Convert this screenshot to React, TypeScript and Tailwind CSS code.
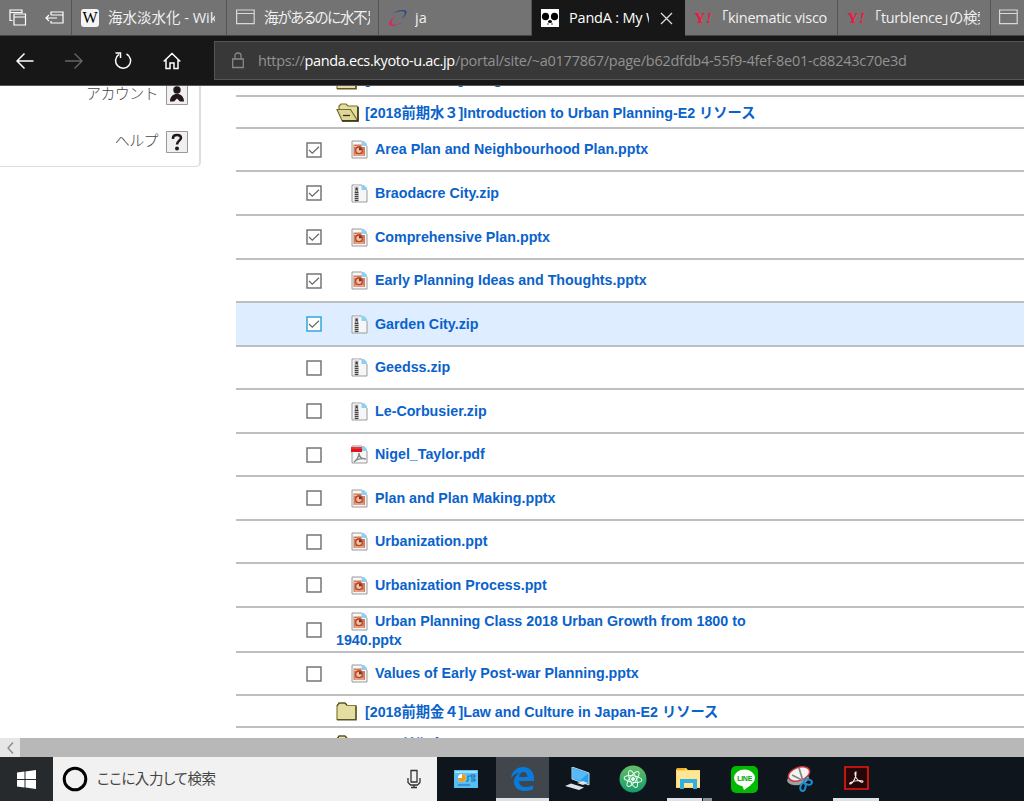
import type { ReactNode } from "react";
import clsx from "clsx";

type Kind = "ppt" | "zip" | "pdf";

const files: { name: string; kind: Kind; height: string; checked?: boolean; active?: boolean }[] = [
  { name: "Area Plan and Neighbourhood Plan.pptx", kind: "ppt", height: "h-[43px]", checked: true },
  { name: "Braodacre City.zip", kind: "zip", height: "h-[44px]", checked: true },
  { name: "Comprehensive Plan.pptx", kind: "ppt", height: "h-[44px]", checked: true },
  { name: "Early Planning Ideas and Thoughts.pptx", kind: "ppt", height: "h-[43px]", checked: true },
  { name: "Garden City.zip", kind: "zip", height: "h-[44px]", checked: true, active: true },
  { name: "Geedss.zip", kind: "zip", height: "h-[43px]" },
  { name: "Le-Corbusier.zip", kind: "zip", height: "h-[44px]" },
  { name: "Nigel_Taylor.pdf", kind: "pdf", height: "h-[43px]" },
  { name: "Plan and Plan Making.pptx", kind: "ppt", height: "h-[44px]" },
  { name: "Urbanization.ppt", kind: "ppt", height: "h-[43px]" },
  { name: "Urbanization Process.ppt", kind: "ppt", height: "h-[44px]" },
  { name: "Urban Planning Class 2018 Urban Growth from 1800 to 1940.pptx", kind: "ppt", height: "h-[45px]" },
  { name: "Values of Early Post-war Planning.pptx", kind: "ppt", height: "h-[43px]" },
];

function WindowIcon() {
  return (
    <svg width="19" height="16" viewBox="0 0 19 16" fill="none" stroke="#d8d8d8" strokeWidth="1.200" className="-mt-[1px] shrink-0">
      <path d="M.6 1h17.600v13.600H.6zM.6 4.500h17.600" />
    </svg>
  );
}

function YahooIcon() {
  return (
    <span className="w-[18px] shrink-0 pt-[2px] font-['Liberation_Serif',serif] text-[14px] font-black leading-4 text-[#f01840]">
      <span className="inline-block origin-left scale-x-[1.15] whitespace-nowrap">
        Y<i>!</i>
      </span>
    </span>
  );
}

function WikiIcon() {
  return (
    <span className="flex h-[18px] w-[18px] shrink-0 items-center justify-center rounded-[3px] bg-[#f5f5f5] font-['Liberation_Serif',serif] text-[16px] leading-none text-black">
      W
    </span>
  );
}

function SwooshIcon() {
  return (
    <svg width="20" height="18" viewBox="0 0 20 18" fill="none" className="shrink-0">
      <path d="M5 4C10 .5 18 0 18.500 2.500 19 5 16.500 7.500 13.500 10 17 6 18 3.500 15.500 2.500 13 1.600 9 2.500 5 4Z" fill="#264a86" />
      <path d="M7 7C2 11 0 14 1.500 16 3.500 18 10 16.500 15 13 10 15.500 5 16.500 4 15 3 13.500 4 10.500 7 7Z" fill="#d42a5b" />
    </svg>
  );
}

function PandaIcon() {
  return (
    <svg width="18" height="18" viewBox="0 0 18 18" className="shrink-0">
      <path fill="#fff" d="M0 0h18v18H0z" />
      <ellipse cx="4.500" cy="7.500" rx="3.600" ry="3.800" />
      <ellipse cx="13.500" cy="7.500" rx="3.600" ry="3.800" />
      <ellipse cx="9" cy="12.500" rx="2" ry="1.500" />
      <circle cx="7" cy="15" r=".7" />
      <circle cx="11" cy="15" r=".7" />
    </svg>
  );
}

function Tab({ icon, width, textClass, children }: { icon: ReactNode; width: string; textClass: string; children: ReactNode }) {
  return (
    <div className={clsx("flex h-full shrink-0 items-center gap-[9px] border-r-[1.5px] border-[#555] pl-[9px]", width)}>
      {icon}
      <span className={clsx("block shrink-0 overflow-hidden whitespace-nowrap leading-6 text-[#f0f0f0] [font-feature-settings:'palt']", textClass)}>
        {children}
      </span>
    </div>
  );
}

function Checkbox({ checked, active }: { checked?: boolean; active?: boolean }) {
  return (
    <svg width="16" height="16" viewBox="0 0 16 16" fill="none" className="shrink-0">
      <rect x="1" y="1" width="14" height="14" fill="#fff" stroke={active ? "#24a0df" : "#6c6c6c"} strokeWidth="1.400" />
      {checked && <path d="M3 8l3.300 3.200 6.700-6.400" stroke="#666" strokeWidth="1.200" />}
    </svg>
  );
}

function FileIcon({ kind }: { kind: Kind }) {
  return (
    <svg width="17" height="19" viewBox="0 0 17 19" fill="none" className="relative -top-px mr-[7px] ml-[15px] inline-block align-middle">
      <path d="M1 1h9.500L16 6v12H1z" fill="#f5f6f7" stroke="#9a9a9a" />
      <path d="M10.500 1v5H16V4L13 1z" fill="#8fd0f2" />
      {kind === "ppt" && (
        <>
          <path d="M2.500 4.500h8v2.500H14v9H2.500z" fill="#d67d5b" />
          <path d="M3 6.500h3M3.500 15h9.500" stroke="#f3c4b0" strokeWidth="1.200" />
          <circle cx="8" cy="10.300" r="3.300" fill="#f3bfa6" stroke="#b04a2d" strokeWidth="1.300" />
          <path d="M8 10.300V7.400a2.900 2.900 0 0 1 2.900 2.900z" fill="#8c2d1a" />
        </>
      )}
      {kind === "zip" && (
        <>
          <path d="M3 1h5v17H3z" fill="#ddd" />
          <path d="M5.600 8v10" stroke="#444" strokeWidth="3.600" strokeDasharray="1.300 .7" />
          <path d="M5.600 3.500v5" stroke="#333" strokeWidth="2.200" />
          <circle cx="5.600" cy="7" r=".7" fill="#fff" />
        </>
      )}
      {kind === "pdf" && (
        <>
          <path d="M0 2h11v5H0z" fill="#e3131b" />
          <path d="M0 2.500h11v1H0z" fill="#f25a5c" />
          <path d="M3 17c4-3 5-6 5-9 0 4 2.500 6 7 6-5-1-9 0-12 3Z" stroke="#888" strokeWidth="1.400" />
        </>
      )}
    </svg>
  );
}

function FolderIcon({ open }: { open?: boolean }) {
  return (
    <svg width={open ? 23 : 21} height="19" viewBox={open ? "0 0 23 19" : "0 0 21 19"} className="shrink-0" strokeWidth="1.200">
      {open ? (
        <>
          <path d="M3 6V3l2-2h5l2 2h9l1 1v14H6" fill="#e4dea0" stroke="#766f2a" />
          <path d="M1 6.500h13.500l7 11H6z" fill="#ded797" stroke="#766f2a" />
          <path d="M22 4v14H6" fill="none" stroke="#333014" strokeWidth="1.500" />
          <path d="M7 12.500h7" stroke="#333014" strokeWidth="1.300" />
        </>
      ) : (
        <>
          <path d="M1 4l2-3h6l2 2.500h9v14H1z" fill="#e4dea0" stroke="#857d35" />
          <path d="M1 17.700h19V4" fill="none" stroke="#5c5625" strokeWidth="1.500" />
          <path d="M1 4l2-3h6l2 2" fill="none" stroke="#4b461b" strokeWidth="1.200" />
        </>
      )}
    </svg>
  );
}

function FolderRow({ name, open, className, textClass = "mt-px" }: { name: string; open?: boolean; className?: string; textClass?: string }) {
  return (
    <div className={clsx("flex shrink-0 items-center border-b-2 border-[#bfbfbf] pl-[100px]", className)}>
      <FolderIcon open={open} />
      <span className={clsx("whitespace-nowrap", textClass, open ? "ml-[6px]" : "ml-[8px]")}>{name}</span>
    </div>
  );
}

function Taskbar() {
  return (
    <footer className="flex h-11 shrink-0 bg-[#0e151d]">
      <div className="flex w-[53px] items-center justify-center bg-[#262a2d]">
        <svg width="19" height="19" viewBox="0 0 19 19" fill="#fff">
          <path d="M0 2.600l7.500-1V9H0zM8.500 1.500L19 0v9H8.500zM0 10h7.500v7.400l-7.500-1zM8.500 10H19v9l-10.500-1.500z" />
        </svg>
      </div>
      <div className="flex w-[384px] items-center bg-[#f1f1f1] pl-[9px]">
        <svg width="26" height="26" viewBox="0 0 26 26" fill="none" stroke="#000" strokeWidth="3">
          <circle cx="13" cy="13" r="10.800" />
        </svg>
        <span className="ml-[9px] w-[310px] text-[14.500px] tracking-[-0.4px] text-[#444] [font-feature-settings:'palt']">ここに入力して検索</span>
        <svg width="14" height="20" viewBox="0 0 14 20" fill="none" stroke="#333" strokeWidth="1.300">
          <path d="M4 1.500h6V13H4zM1 9v4.500L3.500 16h7l2.500-2.500V9M7 16v2.500M4 18.500h6" />
        </svg>
      </div>
      <div className="ml-[1px] grid w-[446px] grid-cols-8 *:flex *:items-center *:justify-center">
        <div>
          <svg width="24" height="18" viewBox="0 0 24 18">
            <path fill="#58bdf2" d="M0 0h24v18H0z" />
            <path fill="#9be0ff" d="M1 1h22v2H1z" />
            <circle cx="8" cy="8" r="4" fill="#fff" />
            <path d="M8 8V4a4 4 0 1 1-4 4z" fill="#ef9d20" />
            <path d="M12 11h2V6h2m1-1h4v2h-4zM17 9h4v2h-4M4 15h12" stroke="#176ba9" fill="none" />
          </svg>
        </div>
        <div className="mr-[1px] ml-[2px] border-b-[3px] border-[#dbe3e9] bg-[#41464c]">
          <svg width="23" height="24" viewBox="0 0 23 24" fill="#087bdc" className="mt-[2px]">
            <path d="M0 11C1 4 6 0 12 0c7 0 11 5 11 11v3H8c0 4 3 6 7 6 3 0 5-.6 7-1.700v4c-2.500 1.200-5 1.700-8 1.700C7 24 3 20 3 15c0-4 2-7 5.500-9C5 6.500 2 8 0 11Zm8-1h8.500c0-3-1.500-5-4-5S8.500 7 8 10Z" />
          </svg>
        </div>
        <div>
          <svg width="25" height="24" viewBox="0 0 25 24">
            <path d="M7 0l17 6v12L7 12z" fill="#249eed" stroke="#b9dced" />
            <path d="M8 1.500l15 5-8 7-7-2z" fill="#57b9f7" />
            <path d="M12 16l6-2 5 2-5 2zM0 19l6-2.500 13 4-5 2.500z" fill="#dce2e6" />
          </svg>
        </div>
        <div>
          <svg width="28" height="28" viewBox="0 0 28 28" fill="none" stroke="#eaffef" strokeWidth="1">
            <defs>
              <linearGradient id="atom" x2="0" y2="1">
                <stop stopColor="#63be68" />
                <stop offset="1" stopColor="#159b6c" />
              </linearGradient>
            </defs>
            <circle cx="14" cy="14" r="13.500" fill="url(#atom)" stroke="none" />
            <ellipse cx="14" cy="14" rx="3.300" ry="9" transform="rotate(-22 14 14)" />
            <ellipse cx="14" cy="14" rx="3.300" ry="9" transform="rotate(38 14 14)" />
            <ellipse cx="14" cy="14" rx="3.300" ry="9" transform="rotate(98 14 14)" />
            <circle cx="14" cy="14" r="1.500" fill="#eaffef" />
          </svg>
        </div>
        <div className="relative">
          <svg width="25" height="22" viewBox="0 0 25 22">
            <path d="M0 2l1-2h9l2 2h12v18H0z" fill="#fbd968" />
            <path d="M1 3h23v16H1z" fill="#ffe594" />
            <path d="M4 21V11h17v10h-4v-6H8v6z" fill="#30aee8" />
            <path fill="#f4ae21" d="M1 0h8v2H1z" />
          </svg>
          <i className="absolute bottom-0 left-[6px] h-[3px] w-[35px] bg-[#dbe3e9]" />
          <i className="absolute bottom-0 left-[42px] h-[3px] w-[9px] bg-[#8a9197]" />
        </div>
        <div>
          <div className="relative flex h-[27px] w-[27px] items-center justify-center rounded-[5px] bg-[#00b900]">
            <svg width="23" height="23" viewBox="0 0 23 23" fill="#fff">
              <ellipse cx="11.500" cy="10" rx="10.500" ry="8.500" />
              <path d="M9 17h9l-7 5z" />
            </svg>
            <b className="absolute top-[8px] font-['Liberation_Sans',sans-serif] text-[7px] leading-[9px] tracking-[-0.3px] text-[#00a900]">LINE</b>
          </div>
        </div>
        <div>
          <svg width="26" height="26" viewBox="0 0 26 26" fill="none">
            <ellipse cx="11" cy="13" rx="11" ry="6" fill="#9aa0a4" transform="rotate(-10 11 13)" />
            <ellipse cx="12" cy="8" rx="11" ry="6.500" fill="#f4f4f4" stroke="#cd393d" strokeWidth="1.500" transform="rotate(-20 12 8)" />
            <path d="M12 2l4 13M5 9l12 6" stroke="#888" strokeWidth="1.800" />
            <ellipse cx="21" cy="16" rx="4" ry="2.500" stroke="#218bd0" strokeWidth="2" transform="rotate(15 21 16)" />
            <ellipse cx="16" cy="21" rx="2.500" ry="4" stroke="#218bd0" strokeWidth="2" transform="rotate(15 16 21)" />
          </svg>
        </div>
        <div className="relative">
          <svg width="25" height="24" viewBox="0 0 25 24" fill="none" className="-mt-[3px]">
            <path d="M1 1h23v22H1z" fill="#260709" stroke="#f01810" strokeWidth="1.600" />
            <path d="M6.500 18c3-1.500 6-7 5.500-12-1.500-.5-1.500 4 1 7 2.500 3 6 4 6 2.500s-7-1.500-12.500 1c-1 .5-1 1.800 0 1.500Z" stroke="#f5e9e9" strokeWidth="1.100" />
          </svg>
          <i className="absolute bottom-0 left-[5px] h-[3px] w-[46px] bg-[#dbe3e9]" />
        </div>
      </div>
    </footer>
  );
}

export default function App() {
  return (
    <div className="flex h-[801px] w-[1024px] flex-col overflow-hidden bg-white font-['Open_Sans','Noto_Sans_CJK_JP',sans-serif]">
      {/* Tabs */}
      <header className="flex h-9 shrink-0 border-b border-[#444] bg-[#737373]">
        <div className="flex w-[72px] shrink-0 items-center gap-[18px] border-r-[1.5px] border-[#555] pl-[9px]">
          <svg width="18" height="17" viewBox="0 0 18 17" fill="none" stroke="#fff" strokeWidth="1.200">
            <path d="M3.500 11.500H1V1h12v3M1 3.500h12M5 5h11.500v11H5zM5 8h11.500" />
          </svg>
          <svg width="19" height="14" viewBox="0 0 19 14" fill="none" stroke="#fff" strokeWidth="1.200">
            <path d="M6 4V1h12v11H6V10M6 4h12M1 7h11M4 4L1 7l3 3" />
          </svg>
        </div>
        <Tab icon={<WikiIcon />} width="w-[155px]" textClass="w-[107px] text-[14.500px]">
          海水淡水化 - Wiki
        </Tab>
        <Tab icon={<WindowIcon />} width="w-[152px]" textClass="w-[106px] text-[14.500px] tracking-[-1.3px]">
          海があるのに水不足
        </Tab>
        <Tab icon={<SwooshIcon />} width="w-[153px]" textClass="w-[100px] text-[14.500px] -ml-[2px]">
          ja
        </Tab>
        <div className="flex h-9 w-[153px] shrink-0 items-center bg-[#171717] pl-[9px]">
          <PandaIcon />
          <span className="ml-[10px] w-[80px] overflow-hidden whitespace-nowrap text-[14.500px] tracking-[-0.2px] text-white">PandA : My W</span>
          <svg width="13" height="13" viewBox="0 0 13 13" stroke="#ddd" strokeWidth="1.300" className="ml-[11px]">
            <path d="M1 1l11 11M12 1L1 12" />
          </svg>
        </div>
        <Tab icon={<YahooIcon />} width="w-[153px]" textClass="w-[108px] text-[14.500px] tracking-[-0.25px]">
          「kinematic visco
        </Tab>
        <Tab icon={<YahooIcon />} width="w-[153px]" textClass="w-[106px] text-[14.500px] tracking-[-0.35px]">
          「turblence」の検索
        </Tab>
        <div className="flex flex-1 items-center pl-[8px]">
          <WindowIcon />
        </div>
      </header>

      {/* Navigation */}
      <nav className="flex h-[50px] shrink-0 items-center border-b-[1.5px] border-[#555] bg-[#171717]">
        <div className="flex w-[214px] shrink-0 items-center gap-[31px] pl-[16px]">
          <svg width="18" height="16" viewBox="0 0 18 16" fill="none" stroke="#fff" strokeWidth="1.500">
            <path d="M17.500 8H1M8.500.5L1 8l7.500 7.500" />
          </svg>
          <svg width="18" height="16" viewBox="0 0 18 16" fill="none" stroke="#666" strokeWidth="1.400">
            <path d="M0 8h17M9.500.5L17 8l-7.500 7.500" />
          </svg>
          <svg width="18" height="19" viewBox="0 0 18 19" fill="none" stroke="#fff" strokeWidth="1.500">
            <path d="M12.500 3a7.500 7.500 0 1 1-7.500.4M1.500 2h5v5" />
          </svg>
          <svg width="18" height="18" viewBox="0 0 18 18" fill="none" stroke="#fff" strokeWidth="1.500">
            <path d="M.7 9.500L9 1.500l8.300 8M3 7.500V16.500h4V11h4v5.500h4V7.500" />
          </svg>
        </div>
        <div className="flex h-[39px] flex-1 items-center border border-r-0 border-[#555] bg-[#383838] pl-[17px]">
          <svg width="12" height="17" viewBox="0 0 12 17" fill="none" stroke="#888" strokeWidth="1.300">
            <path d="M.7 7h10.600v8.500H.7zM3 7V3.500C3 2 4 1 6 1s3 1 3 2.500V7" />
          </svg>
          <span className="ml-[14px] whitespace-nowrap text-[14.500px] tracking-[-0.36px] text-[#929292]">
            https://<span className="text-white">panda.ecs.kyoto-u.ac.jp</span>
            <span className="tracking-[-0.26px]">/portal/site/~a0177867/page/b62dfdb4-55f9-4fef-8e01-c88243c70e3d</span>
          </span>
        </div>
      </nav>

      <main className="flex h-[652px] shrink-0 overflow-hidden">
        {/* Side menu */}
        <aside className="h-[81px] w-[201px] shrink-0 rounded-br-[5px] border-r-2 border-b border-[#ddd] pr-[11px] text-[15px] text-[#444]">
          <div className="-mt-[4px] flex h-[23px] items-center justify-end gap-[8px]">
            <span className="font-light tracking-[-0.6px]">アカウント</span>
            <svg width="22" height="22" viewBox="0 0 22 22">
              <path d="M.5.5h21v21H.5z" fill="#f0f0f0" stroke="#999" />
              <circle cx="11" cy="7" r="3.700" fill="#211717" />
              <path d="M4 18.500c0-5 3-7.500 7-7.500s7 2.500 7 7.500h-4l-3-3-3 3z" fill="#211717" />
            </svg>
          </div>
          <div className="mt-[25px] flex h-[23px] items-center justify-end gap-[8px]">
            <span className="-mt-[2px] font-light tracking-[-0.6px]">ヘルプ</span>
            <svg width="22" height="22" viewBox="0 0 22 22">
              <path d="M.5.5h21v21H.5z" fill="#f0f0f0" stroke="#999" />
              <path d="M7 8V7c0-2 1.500-3 4-3s4 1 4 3-4 3-4 6.500" fill="none" stroke="#211717" strokeWidth="2.500" />
              <circle cx="11" cy="17.500" r="2" fill="#211717" />
            </svg>
          </div>
        </aside>

        {/* Resource list */}
        <section className="ml-[35px] flex flex-1 flex-col font-['Liberation_Sans','Noto_Sans_CJK_JP',sans-serif] text-[14.250px] leading-[16px] font-bold text-[#0a62cb]">
          <FolderRow name="[2018前期火２]Design" className="-mt-[21px] h-[32px]" textClass="mb-[2px]" />
          <FolderRow name="[2018前期水３]Introduction to Urban Planning-E2 リソース" open className="h-[32px]" />
          {files.map((file) => (
            <div key={file.name} className={clsx("flex shrink-0 items-center border-b-2 border-[#bfbfbf] pl-[70px]", file.height, file.active && "bg-[#deedff]")}>
              <Checkbox checked={file.checked} active={file.active} />
              <div className="ml-[14px] w-[425px] translate-y-px">
                <FileIcon kind={file.kind} />
                {file.name}
              </div>
            </div>
          ))}
          <FolderRow name="[2018前期金４]Law and Culture in Japan-E2 リソース" className="h-[32px]" />
          <FolderRow name="[2018前期金５]Environmental Design-E2 リソース" className="h-[34px]" />
        </section>
      </main>

      {/* Horizontal scrollbar */}
      <div className="flex h-[19px] shrink-0 bg-[#b8b8b8]">
        <div className="flex w-[20px] items-center justify-center bg-[#e6e6e6]">
          <svg width="7" height="12" viewBox="0 0 7 12" fill="none" stroke="#888" strokeWidth="1.300">
            <path d="M6 .5L1 6l5 5.500" />
          </svg>
        </div>
      </div>
      <Taskbar />
    </div>
  );
}
